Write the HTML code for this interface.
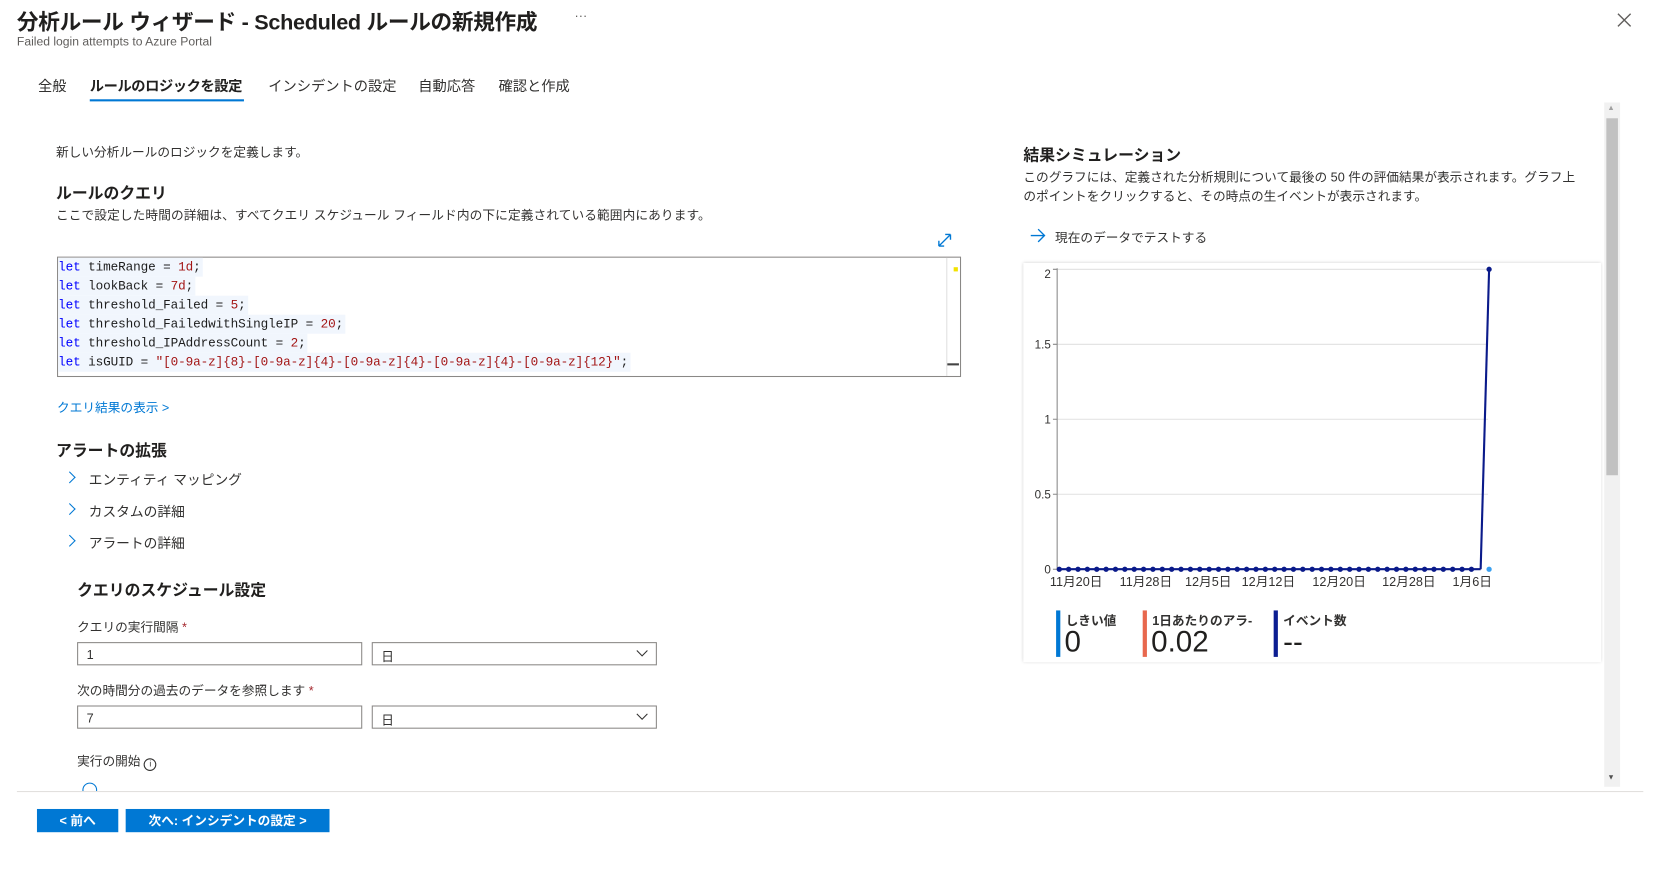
<!DOCTYPE html>
<html><head><meta charset="utf-8">
<style>
*{margin:0;padding:0;box-sizing:border-box}
html,body{width:1656px;height:879px;overflow:hidden;background:#fff}
#w{position:absolute;left:0;top:0;width:1568px;height:833px;transform:scale(1.0561);transform-origin:0 0;font-family:"Liberation Sans","Noto Sans CJK JP",sans-serif;color:#323130}
.a{position:absolute;white-space:nowrap}
.h{font-weight:bold;font-size:15px;color:#201f1e}
.s{font-size:12px}
.inp{position:absolute;height:22px;border:1px solid #8a8886;font-size:12px;padding:4px 8px;background:#fff}
.code div{height:18px;line-height:18px;background:#f1f6fd;display:table;padding-right:2px}
.kw{color:#0000ff}.st{color:#a31515}
.btn{position:absolute;top:766px;height:22px;background:#0078d4;color:#fff;font-size:12px;font-weight:bold;text-align:center;line-height:22px}
.chev{position:absolute;width:8px;height:8px;border-right:1.3px solid #0078d4;border-top:1.3px solid #0078d4;transform:rotate(45deg)}
</style></head><body><div id="w">
<div class="a" style="left:16px;top:4px;font-size:20.5px;font-weight:bold;color:#201f1e;letter-spacing:-0.3px">分析ルール ウィザード - Scheduled ルールの新規作成</div>
<div class="a" style="left:544px;top:8px;font-size:12px;color:#605e5c">···</div>
<div class="a" style="left:16px;top:34px;font-size:11.5px;color:#605e5c">Failed login attempts to Azure Portal</div>
<svg class="a" style="left:1531px;top:12px" width="14" height="14"><path d="M1 1L13 13M13 1L1 13" stroke="#605e5c" stroke-width="1.3"/></svg>
<div class="a" style="left:36px;top:70px;font-size:13.5px">全般</div>
<div class="a" style="left:85px;top:70px;font-size:13.5px;color:#201f1e;font-weight:bold;letter-spacing:-0.4px">ルールのロジックを設定</div>
<div class="a" style="left:85px;top:94px;width:146px;height:2px;background:#0078d4"></div>
<div class="a" style="left:254px;top:70px;font-size:13.5px">インシデントの設定</div>
<div class="a" style="left:396px;top:70px;font-size:13.5px">自動応答</div>
<div class="a" style="left:472px;top:70px;font-size:13.5px">確認と作成</div>
<div class="a" style="left:1519px;top:97px;width:15px;height:648px;background:#f1f1f1"></div>
<div class="a" style="left:1521px;top:112px;width:11px;height:338px;background:#c1c1c1"></div>
<div class="a" style="left:1522px;top:99px;font-size:7px;color:#a0a0a0">▲</div>
<div class="a" style="left:1522px;top:733px;font-size:7px;color:#505050">▼</div>
<div class="a s" style="left:53px;top:135px">新しい分析ルールのロジックを定義します。</div>
<div class="a h" style="left:53px;top:172px">ルールのクエリ</div>
<div class="a s" style="left:53px;top:195px;letter-spacing:0.1px">ここで設定した時間の詳細は、すべてクエリ スケジュール フィールド内の下に定義されている範囲内にあります。</div>
<svg class="a" style="left:887px;top:220px" width="15" height="15"><path d="M2 13L13 2M2 13v-5M2 13h5M13 2v5M13 2h-5" stroke="#0078d4" stroke-width="1.3" fill="none"/></svg>
<div class="a" style="left:54px;top:243px;width:856px;height:114px;border:1px solid #8a8886"></div>
<div class="a" style="left:896px;top:244px;width:13px;height:112px;border-left:1px solid #e0e0e0"></div>
<div class="a" style="left:903px;top:253px;width:4px;height:4px;background:#f2e200"></div>
<div class="a" style="left:897px;top:344px;width:11px;height:2px;background:#444"></div>
<div class="a code" style="left:55px;top:244px;font-family:'Liberation Mono',monospace;font-size:12px;color:#1e1e1e;letter-spacing:-0.1px">
<div><span class="kw">let</span> timeRange = <span class="st">1d</span>;</div>
<div><span class="kw">let</span> lookBack = <span class="st">7d</span>;</div>
<div><span class="kw">let</span> threshold_Failed = <span class="st">5</span>;</div>
<div><span class="kw">let</span> threshold_FailedwithSingleIP = <span class="st">20</span>;</div>
<div><span class="kw">let</span> threshold_IPAddressCount = <span class="st">2</span>;</div>
<div><span class="kw">let</span> isGUID = <span class="st">"[0-9a-z]{8}-[0-9a-z]{4}-[0-9a-z]{4}-[0-9a-z]{4}-[0-9a-z]{12}"</span>;</div>
</div>
<div class="a s" style="left:54px;top:377px;color:#0078d4">クエリ結果の表示 &gt;</div>
<div class="a h" style="left:53px;top:416px">アラートの拡張</div>
<div class="chev" style="left:62px;top:448px"></div><div class="a" style="left:84px;top:444px;font-size:13px">エンティティ マッピング</div>
<div class="chev" style="left:62px;top:478px"></div><div class="a" style="left:84px;top:474px;font-size:13px">カスタムの詳細</div>
<div class="chev" style="left:62px;top:508px"></div><div class="a" style="left:84px;top:504px;font-size:13px">アラートの詳細</div>
<div class="a h" style="left:73px;top:548px">クエリのスケジュール設定</div>
<div class="a s" style="left:73px;top:585px">クエリの実行間隔 <span style="color:#a4262c">*</span></div>
<div class="inp" style="left:73px;top:608px;width:270px">1</div>
<div class="inp" style="left:352px;top:608px;width:270px">日</div>
<div class="a s" style="left:73px;top:645px">次の時間分の過去のデータを参照します <span style="color:#a4262c">*</span></div>
<div class="inp" style="left:73px;top:668px;width:270px">7</div>
<div class="inp" style="left:352px;top:668px;width:270px">日</div>
<svg class="a" style="left:602px;top:615px" width="12" height="8"><path d="M1 1l5 5 5-5" stroke="#323130" fill="none"/></svg>
<svg class="a" style="left:602px;top:675px" width="12" height="8"><path d="M1 1l5 5 5-5" stroke="#323130" fill="none"/></svg>
<div class="a s" style="left:73px;top:712px">実行の開始 <span style="display:inline-block;width:12px;height:12px;border:1px solid #323130;border-radius:50%;font-size:8px;text-align:center;line-height:10px;vertical-align:-1px">i</span></div>
<div class="a" style="left:78px;top:741px;width:14px;height:14px;border:1px solid #0078d4;border-radius:50%"></div>
<div class="a" style="left:16px;top:749px;width:1540px;height:80px;background:#fff;border-top:1px solid #e1dfdd"></div>
<div class="btn" style="left:35px;width:77px">&lt; 前へ</div>
<div class="btn" style="left:119px;width:193px">次へ: インシデントの設定 &gt;</div>
<div class="a h" style="left:969px;top:136px">結果シミュレーション</div>
<div class="a s" style="left:969px;top:159px">このグラフには、定義された分析規則について最後の 50 件の評価結果が表示されます。グラフ上</div>
<div class="a s" style="left:969px;top:177px">のポイントをクリックすると、その時点の生イベントが表示されます。</div>
<svg class="a" style="left:975px;top:216px" width="16" height="14"><path d="M1 7h13M8 1l6 6-6 6" stroke="#0078d4" stroke-width="1.3" fill="none"/></svg>
<div class="a s" style="left:999px;top:216px">現在のデータでテストする</div>
<div class="a" style="left:969px;top:249px;width:547px;height:378px;box-shadow:0 0 3px rgba(0,0,0,.18);background:#fff"></div>
<svg class="a" style="left:969px;top:249px" width="547" height="378" font-family="Liberation Sans,Noto Sans CJK JP,sans-serif" font-size="11" fill="#323130">
<g stroke="#e1e1e1"><line x1="32" y1="6" x2="440" y2="6"/><line x1="32" y1="77" x2="440" y2="77"/><line x1="32" y1="148" x2="440" y2="148"/><line x1="32" y1="219" x2="440" y2="219"/></g>
<line x1="32" y1="5" x2="32" y2="290" stroke="#888"/>
<g stroke="#888"><line x1="28" y1="6" x2="32" y2="6"/><line x1="28" y1="77" x2="32" y2="77"/><line x1="28" y1="148" x2="32" y2="148"/><line x1="28" y1="219" x2="32" y2="219"/><line x1="28" y1="290" x2="32" y2="290"/></g>
<g text-anchor="end"><text x="26" y="14">2</text><text x="26" y="81">1.5</text><text x="26" y="152">1</text><text x="26" y="223">0.5</text><text x="26" y="294">0</text></g>
<line x1="34" y1="290" x2="433" y2="290" stroke="#0a1a8a" stroke-width="2"/>
<line x1="34" y1="290" x2="433" y2="290" stroke="#0a1a8a" stroke-width="5" stroke-linecap="round" stroke-dasharray="0 8.87"/>
<line x1="433" y1="290" x2="441" y2="6" stroke="#0a1a8a" stroke-width="2"/>
<circle cx="441" cy="6" r="2.5" fill="#0a1a8a"/>
<circle cx="441" cy="290" r="2.5" fill="#3aa0f0"/>
<g text-anchor="middle" font-size="12"><text x="50" y="306">11月20日</text><text x="116" y="306">11月28日</text><text x="175" y="306">12月5日</text><text x="232" y="306">12月12日</text><text x="299" y="306">12月20日</text><text x="365" y="306">12月28日</text><text x="425" y="306">1月6日</text></g>
</svg>
<div class="a" style="left:1000px;top:578px;width:4px;height:44px;background:#0078d4"></div>
<div class="a" style="left:1082px;top:578px;width:4px;height:44px;background:#e8684e"></div>
<div class="a" style="left:1206px;top:578px;width:4px;height:44px;background:#0c1e92"></div>
<div class="a s" style="left:1009px;top:579px;font-weight:bold">しきい値</div>
<div class="a s" style="left:1091px;top:579px;font-weight:bold">1日あたりのアラ-</div>
<div class="a s" style="left:1215px;top:579px;font-weight:bold">イベント数</div>
<div class="a" style="left:1008px;top:592px;font-size:28px;color:#201f1e">0</div>
<div class="a" style="left:1090px;top:592px;font-size:28px;color:#201f1e">0.02</div>
<div class="a" style="left:1215px;top:592px;font-size:28px;color:#201f1e">--</div>
</div></body></html>
